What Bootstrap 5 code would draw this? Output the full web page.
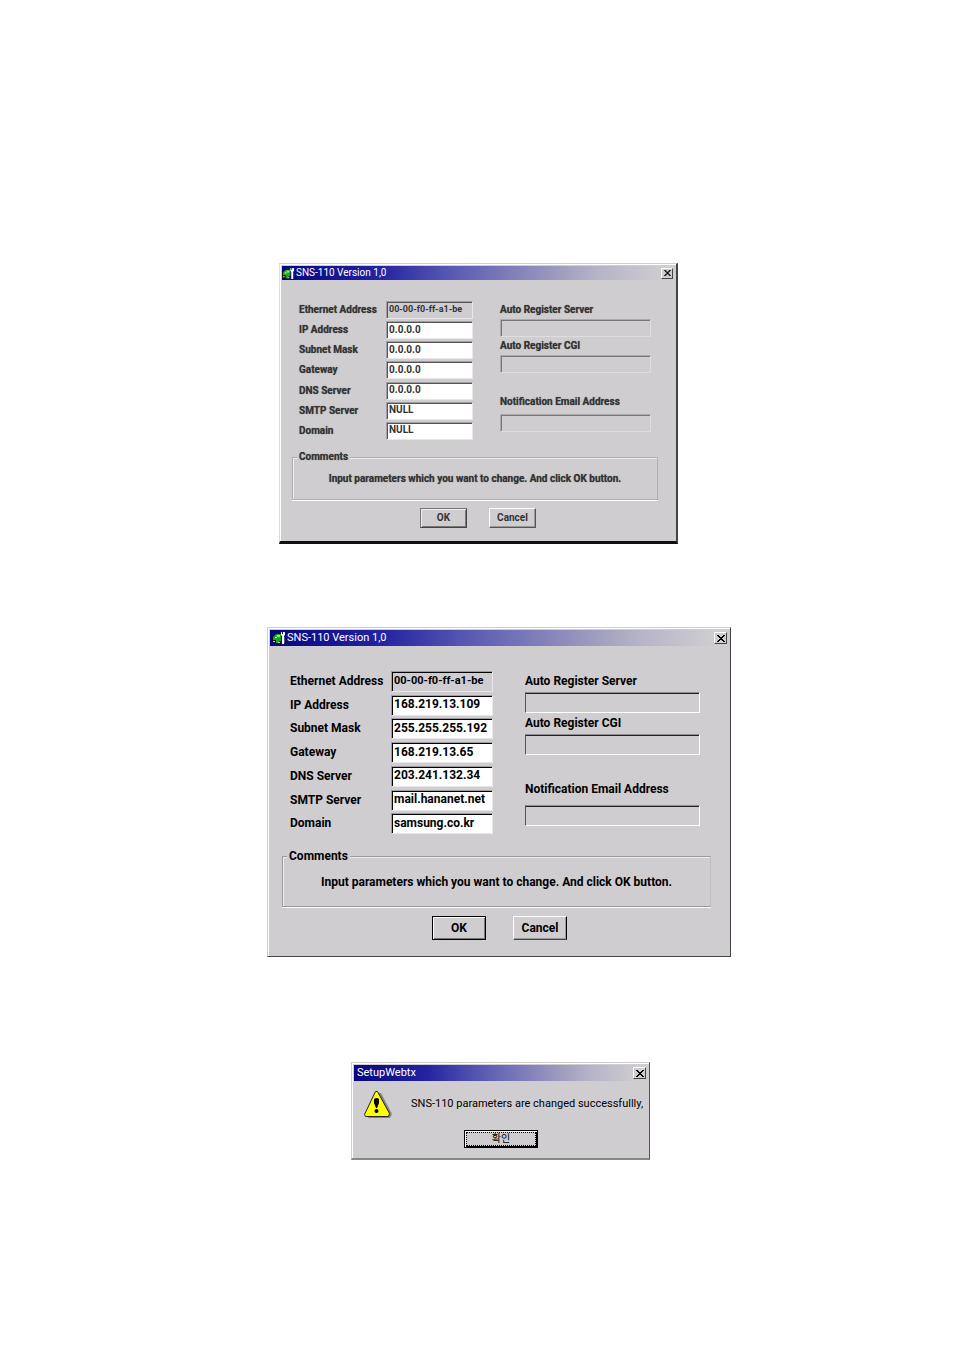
<!DOCTYPE html>
<html lang="en">
<head>
<meta charset="utf-8">
<meta name="viewport" content="width=device-width, initial-scale=1">
<title>SNS-110 Setup</title>
<link href="https://cdn.jsdelivr.net/npm/bootstrap@5.3.0/dist/css/bootstrap.min.css" rel="stylesheet">
<style>
body{background:#fff;color:#000;font-family:Roboto,"Noto Sans CJK KR",sans-serif;font-size:12px}
main{padding:263px 0 192px}
/* Window frame */
.win{--face:#d0cdd0;--row:166px;--box:21px;--fs:12px;--lbl:101px;--fld:102px;--gap:32px;--side:175px;
  background:var(--face);width:100%;max-width:464px;margin-left:44px;font-size:var(--fs);
  border:1px solid #d0cdd0;border-right:1px solid #444;border-bottom:1px solid #444;padding:2px 1px 0 2px;box-shadow:inset 1px 1px #fff}
.win-bar{height:16px;background:linear-gradient(90deg,#060682,#2424a2 25%,#5656b2 42%,#8582ba 60%,#b5b3c6 80%,#d0cdd0 97%);color:#fff;padding:0 2px 0 2px}
.win-bar h1{font-size:11px;line-height:16px;margin:0 0 0 1px;font-weight:400;white-space:nowrap}
.win svg{flex-shrink:0}
.win-x{width:13px;height:12px;background:var(--face);border:1px solid;border-color:#fff #444 #444 #fff;padding:0;line-height:0;display:flex;align-items:center;justify-content:center}
.win-form{font-weight:700;padding:25px 9px 16px 11px}
.win-cols{display:grid;grid-template-columns:var(--lbl) var(--fld) auto;padding-left:9px}
.win-rows{display:grid;grid-column:span 2;grid-template-columns:var(--lbl) var(--fld);grid-template-rows:repeat(7,1fr);height:var(--row);align-items:start}
.win-side{margin-left:var(--gap);width:var(--side)}
.win label{line-height:var(--box);display:block;white-space:nowrap}
.win input{display:block;width:100%;min-width:0;height:var(--box);border:1px solid;border-color:#a09ea0 #e8e6e8 #e8e6e8 #a09ea0;box-shadow:inset 1px 1px #000;background:#fff;color:#000;font:inherit;padding:0 0 2px 2px;border-radius:0;outline:0}
.win input[readonly]{background:var(--face);font-size:11px}
.win-side input{border-color:#8d8b8d #fff #fff #555;box-shadow:inset 0 1px #222}
.win-note{margin-top:24px}
.win-note input{margin-top:5px}
.win-group{border:1px solid #999;box-shadow:inset 1px 1px #eee,0 1px #fff;border-right-color:#bebcbe;margin:11px 9px 0 1px;padding:0;height:59px;text-align:center}
.win-group legend{float:none;width:auto;font-size:inherit;line-height:16px;margin:0 0 0 4px;padding:0 2px;text-align:left;background:var(--face)}
.win-group p{margin:9px 0 0;line-height:18px;white-space:nowrap}
.win-acts{gap:27px;margin-top:9px;padding-right:2px}
.win-btn{width:54px;height:24px;background:var(--face);border:1px solid;border-color:#fff #000 #444 #fff;color:#000;font:inherit;padding:0;line-height:1;box-shadow:inset -1px -1px #999}
.win-btn.is-main{border-color:#000;box-shadow:inset 1px 1px #fff,inset -1px -1px #777}
/* Compact, softer window */
.win-sm{--row:141px;--box:18px;--fs:10px;--lbl:87px;--fld:87px;--gap:27px;--side:151px;max-width:399px;margin-left:3px;color:#333;border-bottom:3px solid #111;border-right:2px solid #444;border-left-color:#ddd}
.win-sm .win-bar{height:14px;padding-left:0}
.win-sm .win-bar h1{font-size:10px;line-height:14px}
.win-sm .win-form{padding:21px 8px 13px 9px;text-shadow:0 0 1px #666}
.win-sm .win-cols{padding-left:8px}
.win-sm input{color:#333;box-shadow:inset 1px 1px #555}
.win-sm input[readonly]{font-size:9px}
.win-sm .win-side input{border-color:#aaa #ddd #ddd #aaa;box-shadow:inset 1px 1px #777}
.win-sm .win-note{margin-top:20px}
.win-sm .win-note input{margin-top:3px}
.win-sm .win-group{height:50px;margin-top:8px;border-color:#b0aeb0}
.win-sm .win-group legend{line-height:14px}
.win-sm .win-group p{margin-top:7px;line-height:16px}
.win-sm .win-acts{gap:22px;margin-top:8px;padding-right:2px}
.win-sm .win-btn{width:47px;height:20px;color:#333;border-color:#fff #555 #555 #fff}
.win-sm .win-btn.is-main{border-color:#777 #444 #444 #777;box-shadow:inset 1px 1px #eee,inset -1px -1px #777}
.win-sm .win-x{width:12px;height:11px}
/* Message box */
.win-msg{max-width:299px;margin-left:47px;font-size:11px;border-bottom:2px solid #888;border-right:1px solid #555}
.win-msg .msg-body{padding-top:8px}
.win-msg .msg-row{padding-left:10px}
.win-msg .msg-text{margin-left:19px;white-space:nowrap;line-height:26px}
.win-msg .msg-ok{width:74px;height:18px;padding:1px;border:1px solid #000;background:var(--face);box-shadow:inset 1px 1px #fff,inset -1px -1px #000;margin:11px 0 10px}
.win-msg .msg-ok span{display:block;border:1px dotted #000;height:14px;line-height:12px;font-size:10px}
.after-one{margin-top:83px}
.after-two{margin-top:105px}
</style>
</head>
<body>
<svg class="d-none" aria-hidden="true">
  <symbol id="app" viewBox="0 0 14 14"><path d="M0 6l3-4h6v9H7v2H3v-2H0z" fill="#111"/><path d="M1 6l3-3h5v7H7v2H4V9H1z" fill="#1ba52b"/><path d="M5 4h3v2H5z" fill="#8f4"/><path d="M3 6h2v1H3z" fill="#fff"/><path d="M1 10h2v1H1zm5 1h2v1H6z" fill="#e8e020"/><path d="M9 1h1v2h1V1h2v3l-1 1v8h-2V5L9 4z" fill="#fff"/><path d="M12 6h1v6h-1z" fill="#555"/></symbol>
  <symbol id="ex" viewBox="0 0 8 7"><path d="M0 0h2v1h1v1h2V1h1V0h2v1H7v1H6v1H5v1h1v1h1v1h1v1H6V6H5V5H3v1H2v1H0V6h1V5h1V4h1V3H2V2H1V1H0z" fill="#000"/></symbol>
</svg>
<main class="d-flex flex-column align-items-center">

  <section class="win win-sm">
    <header class="win-bar d-flex align-items-center"><svg width="13" height="13"><use href="#app"/></svg><h1>SNS-110 Version 1,0</h1><button class="win-x ms-auto" type="button" aria-label="Close"><svg width="7" height="6"><use href="#ex"/></svg></button></header>
    <form class="win-form">
      <div class="win-cols">
        <div class="win-rows">
          <label for="a1">Ethernet Address</label><input id="a1" value="00-00-f0-ff-a1-be" readonly>
          <label for="a2">IP Address</label><input id="a2" value="0.0.0.0">
          <label for="a3">Subnet Mask</label><input id="a3" value="0.0.0.0">
          <label for="a4">Gateway</label><input id="a4" value="0.0.0.0">
          <label for="a5">DNS Server</label><input id="a5" value="0.0.0.0">
          <label for="a6">SMTP Server</label><input id="a6" value="NULL">
          <label for="a7">Domain</label><input id="a7" value="NULL">
        </div>
        <div class="win-side">
          <label for="a8">Auto Register Server</label><input id="a8" readonly>
          <label for="a9">Auto Register CGI</label><input id="a9" readonly>
          <div class="win-note"><label for="a10">Notification Email Address</label><input id="a10" readonly></div>
        </div>
      </div>
      <fieldset class="win-group"><legend>Comments</legend><p>Input parameters which you want to change. And click OK button.</p></fieldset>
      <div class="win-acts d-flex justify-content-center"><button class="win-btn is-main" type="button">OK</button><button class="win-btn" type="button">Cancel</button></div>
    </form>
  </section>

  <section class="win after-one">
    <header class="win-bar d-flex align-items-center"><svg width="14" height="14"><use href="#app"/></svg><h1>SNS-110 Version 1,0</h1><button class="win-x ms-auto" type="button" aria-label="Close"><svg width="8" height="7"><use href="#ex"/></svg></button></header>
    <form class="win-form">
      <div class="win-cols">
        <div class="win-rows">
          <label for="b1">Ethernet Address</label><input id="b1" value="00-00-f0-ff-a1-be" readonly>
          <label for="b2">IP Address</label><input id="b2" value="168.219.13.109">
          <label for="b3">Subnet Mask</label><input id="b3" value="255.255.255.192">
          <label for="b4">Gateway</label><input id="b4" value="168.219.13.65">
          <label for="b5">DNS Server</label><input id="b5" value="203.241.132.34">
          <label for="b6">SMTP Server</label><input id="b6" value="mail.hananet.net">
          <label for="b7">Domain</label><input id="b7" value="samsung.co.kr">
        </div>
        <div class="win-side">
          <label for="b8">Auto Register Server</label><input id="b8" readonly>
          <label for="b9">Auto Register CGI</label><input id="b9" readonly>
          <div class="win-note"><label for="b10">Notification Email Address</label><input id="b10" readonly></div>
        </div>
      </div>
      <fieldset class="win-group"><legend>Comments</legend><p>Input parameters which you want to change. And click OK button.</p></fieldset>
      <div class="win-acts d-flex justify-content-center"><button class="win-btn is-main" type="button">OK</button><button class="win-btn" type="button">Cancel</button></div>
    </form>
  </section>

  <section class="win win-msg after-two">
    <header class="win-bar d-flex align-items-center"><h1>SetupWebtx</h1><button class="win-x ms-auto" type="button" aria-label="Close"><svg width="8" height="7"><use href="#ex"/></svg></button></header>
    <div class="msg-body">
      <div class="msg-row d-flex align-items-center">
        <svg width="28" height="30" viewBox="0 0 28 30"><path d="M14 4h3l11 21-2 4H4z" fill="#858385"/><path d="M11.500 2.500h2l12 22-1 3H1.500l-1-2z" fill="#ff0" stroke="#222" stroke-width="1"/><path d="M10 10q3-2 5 0v4l-2 5h-1l-2-5z" fill="#000"/><circle cx="12.500" cy="22" r="2" fill="#000"/></svg>
        <p class="msg-text mb-0">SNS-110 parameters are changed successfullly,</p>
      </div>
      <div class="text-center"><button class="msg-ok" type="button"><span lang="ko">확인</span></button></div>
    </div>
  </section>
</main>
<script src="https://cdn.jsdelivr.net/npm/bootstrap@5.3.0/dist/js/bootstrap.bundle.min.js"></script>
</body>
</html>
